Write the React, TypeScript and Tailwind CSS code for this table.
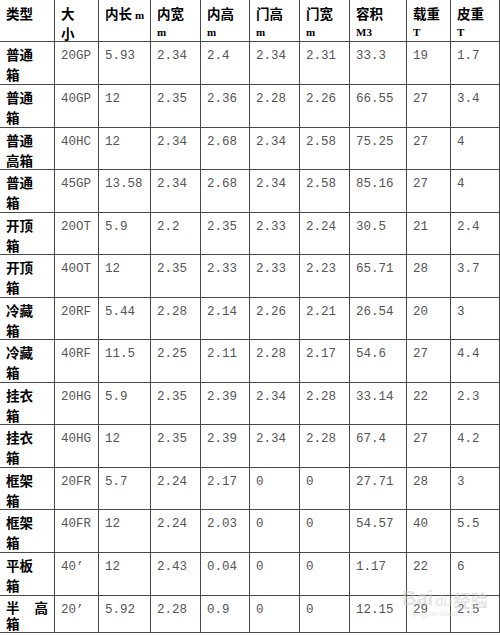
import React from "react";

const head: [string, string][] = [
  ["类型", ""],
  ["大", "小"],
  ["内长", "m"],
  ["内宽", "m"],
  ["内高", "m"],
  ["门高", "m"],
  ["门宽", "m"],
  ["容积", "M3"],
  ["载重", "T"],
  ["皮重", "T"],
];

const rows: string[][] = [
  ["普通", "箱", "20GP", "5.93", "2.34", "2.4", "2.34", "2.31", "33.3", "19", "1.7"],
  ["普通", "箱", "40GP", "12", "2.35", "2.36", "2.28", "2.26", "66.55", "27", "3.4"],
  ["普通", "高箱", "40HC", "12", "2.34", "2.68", "2.34", "2.58", "75.25", "27", "4"],
  ["普通", "箱", "45GP", "13.58", "2.34", "2.68", "2.34", "2.58", "85.16", "27", "4"],
  ["开顶", "箱", "20OT", "5.9", "2.2", "2.35", "2.33", "2.24", "30.5", "21", "2.4"],
  ["开顶", "箱", "40OT", "12", "2.35", "2.33", "2.33", "2.23", "65.71", "28", "3.7"],
  ["冷藏", "箱", "20RF", "5.44", "2.28", "2.14", "2.26", "2.21", "26.54", "20", "3"],
  ["冷藏", "箱", "40RF", "11.5", "2.25", "2.11", "2.28", "2.17", "54.6", "27", "4.4"],
  ["挂衣", "箱", "20HG", "5.9", "2.35", "2.39", "2.34", "2.28", "33.14", "22", "2.3"],
  ["挂衣", "箱", "40HG", "12", "2.35", "2.39", "2.34", "2.28", "67.4", "27", "4.2"],
  ["框架", "箱", "20FR", "5.7", "2.24", "2.17", "0", "0", "27.71", "28", "3"],
  ["框架", "箱", "40FR", "12", "2.24", "2.03", "0", "0", "54.57", "40", "5.5"],
  ["平板", "箱", "40’", "12", "2.43", "0.04", "0", "0", "1.17", "22", "6"],
  ["半 高", "箱", "20’", "5.92", "2.28", "0.9", "0", "0", "12.15", "29", "2.5"],
];

const cell = "border-r border-b border-[#4a4a4a] pl-[6px] overflow-hidden";
const zh = "font-['Noto_Sans_CJK_SC',sans-serif] font-bold text-black text-[13.5px]";
const unitCls = "font-['Liberation_Serif',serif] font-bold text-black text-[11px]";

export default function App() {
  return (
    <div className="relative w-[500px] h-[635px] bg-white overflow-hidden">
      <div className="grid grid-cols-[55px_44px_52px_50px_49px_50px_50px_57px_44px_49px] grid-rows-[42px_43px_43px_42px_43px_42px_43px_42px_43px_42px_43px_42px_43px_43px_37px] w-[500px]">
        {head.map(([label, unit], i) => (
          <div key={i} className={`${cell} pt-[3px]`}>
            {i === 1 ? (
              <>
                <div className={`${zh} leading-[20px]`}>{label}</div>
                <div className={`${zh} leading-[20px]`}>{unit}</div>
              </>
            ) : i === 2 ? (
              <div className={`${zh} leading-[20px]`}>
                {label} <span className={unitCls}>{unit}</span>
              </div>
            ) : (
              <>
                <div className={`${zh} leading-[20px]`}>{label}</div>
                {unit && <div className={`${unitCls} leading-[18px]`}>{unit}</div>}
              </>
            )}
          </div>
        ))}
        {rows.map((r, ri) => {
          const last = ri === rows.length - 1;
          return r.slice(1).map((v, ci) =>
            ci === 0 ? (
              <div
                key={`${ri}-${ci}`}
                className={`${cell} pr-[6px] ${zh} ${last ? "pt-[3px] leading-[16px]" : "pt-[2px] leading-[20px]"}`}
              >
                {r[0].includes(" ") ? (
                  <div className="flex justify-between">
                    {r[0].split(" ").map((c) => (
                      <span key={c}>{c}</span>
                    ))}
                  </div>
                ) : (
                  <div>{r[0]}</div>
                )}
                <div>{v}</div>
              </div>
            ) : (
              <div
                key={`${ri}-${ci}`}
                className={`${cell} pt-[4px] font-['Liberation_Mono',monospace] text-[12.5px] leading-[20px] text-[#555]`}
              >
                {v}
              </div>
            )
          );
        })}
      </div>
      <div className="absolute left-[402px] top-[588px] flex flex-col items-center pointer-events-none opacity-50">
        <div className="flex items-end gap-[2px] text-[#c8c8c8]">
          <span className="font-['Liberation_Sans',sans-serif] text-[20px] font-bold leading-none">Bai</span>
          <span className="font-['Liberation_Sans',sans-serif] text-[15px] leading-none">du</span>
          <span className="font-['Noto_Sans_CJK_SC',sans-serif] text-[17px] font-bold leading-none">经验</span>
        </div>
        <span className="font-['Liberation_Sans',sans-serif] text-[8px] text-[#d0d0d0] leading-none mt-[2px]">
          jingyan.baidu.com
        </span>
      </div>
    </div>
  );
}
